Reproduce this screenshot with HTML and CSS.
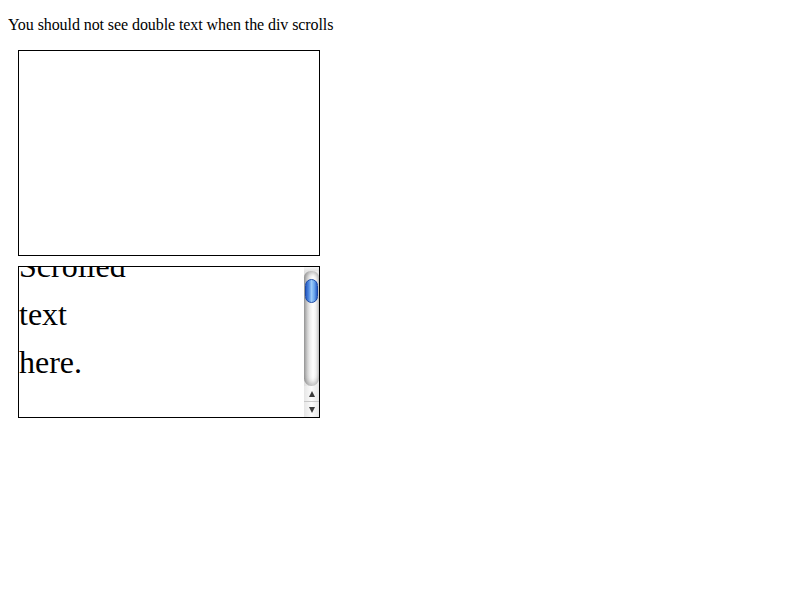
FILE: index.html
```html
<!DOCTYPE html>
<html>
<head>
<meta charset="utf-8">
<link rel="stylesheet" href="styles.css">
</head>
<body>
<p class="note">You should not see double text when the div scrolls</p>
<div class="box empty"></div>
<div class="box scroller">
  <div class="viewport">
    <div class="scrolled">Scrolled<br>text<br>here.</div>
  </div>
  <div class="scrollbar">
    <div class="track">
      <div class="cap"></div>
      <div class="groove">
        <div class="thumb"></div>
      </div>
    </div>
    <div class="btn up"><span class="arrow-up"></span></div>
    <div class="btn down"><span class="arrow-down"></span></div>
  </div>
</div>
</body>
</html>
```
FILE: styles.css
```css
html {
  margin: 0;
  padding: 0;
}
body {
  margin: 0 8px 8px 8px;
  padding: 0;
  font-family: "Liberation Serif", "Times New Roman", serif;
  font-size: 16px;
  color: #000;
  background: #fff;
}
.note {
  margin: 16px 0;
  line-height: 18px;
  letter-spacing: -0.08px;
}
.box {
  margin: 10px;
  width: 300px;
  border: 1px solid #000;
}
.empty {
  height: 204px;
}
.scroller {
  height: 150px;
  display: flex;
}
.viewport {
  flex: 1;
  overflow: hidden;
}
.scrolled {
  font-size: 32px;
  line-height: 48px;
  margin-top: -25px;
}
.scrollbar {
  width: 15px;
  display: flex;
  flex-direction: column;
  background: #f4f4f4;
}
.track {
  height: 119px;
  display: flex;
  flex-direction: column;
  background: linear-gradient(to right, #dedede, #f6f6f6 50%, #e8e8e8);
}
.cap {
  height: 4px;
  background: linear-gradient(to bottom, #f6f6f6, #e2e2e2);
}
.groove {
  flex: 1;
  border-radius: 7px 7px 8px 8px;
  background: linear-gradient(to right, #9c9c9c, #c8c8c8 18%, #eeeeee 40%, #ffffff 60%, #f2f2f2 80%, #cfcfcf);
  box-shadow: inset 0 -5px 5px -2px rgba(120,120,120,0.45), inset 0 4px 4px -2px rgba(120,120,120,0.5);
  padding-top: 8px;
}
.thumb {
  height: 22px;
  width: 11px;
  margin: 0 auto;
  border: 1px solid #1d4ba6;
  border-radius: 7px;
  background: linear-gradient(to right, #2a5cc4, #4f8ae0 25%, #9ccaf8 50%, #6aa6ee 75%, #2b5ec6);
}
.btn {
  height: 15px;
  display: flex;
  align-items: center;
  justify-content: center;
  background: linear-gradient(to right, #e6e6e6, #fbfbfb 50%, #e6e6e6);
}
.up {
  border-bottom: 1px solid #c8c8c8;
}
.arrow-up {
  width: 0;
  height: 0;
  border-left: 3.5px solid transparent;
  border-right: 3.5px solid transparent;
  border-bottom: 6px solid #3a3a3a;
}
.arrow-down {
  width: 0;
  height: 0;
  border-left: 3.5px solid transparent;
  border-right: 3.5px solid transparent;
  border-top: 6px solid #3a3a3a;
}
```
